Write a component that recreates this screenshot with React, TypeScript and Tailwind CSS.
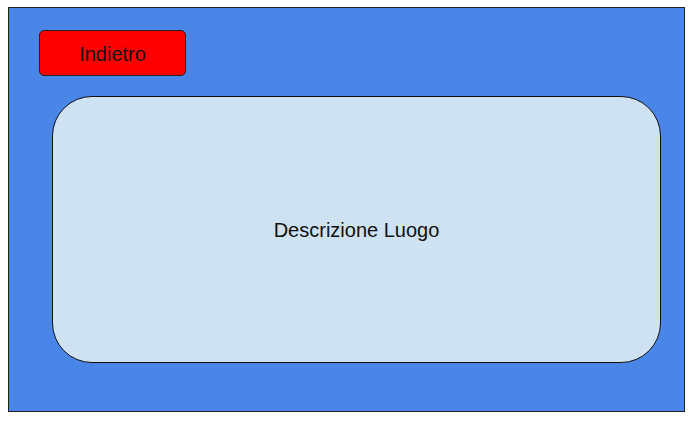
import React from "react";

const App = () => {
  return (
    <div className="w-[691px] h-[422px] bg-white pt-[7px] pl-[8px]" style={{ fontFamily: '"Liberation Sans", Arial, sans-serif' }}>
      <div className="w-[677px] h-[405px] bg-[#4a86e8] border border-[#222] flex flex-col pt-[22px]">
        <button className="ml-[30px] w-[147px] h-[46px] bg-[#ff0000] border border-[#222] rounded-[5px] text-[20px] text-[#111] flex items-center justify-center pt-[1px]">
          Indietro
        </button>
        <div className="ml-[43px] mt-[20px] w-[609px] h-[267px] bg-[#cfe2f3] border border-[#111] rounded-[40px] flex items-center justify-center text-[20px] text-[#111] pt-[1px]">
          Descrizione Luogo
        </div>
      </div>
    </div>
  );
};

export default App;
